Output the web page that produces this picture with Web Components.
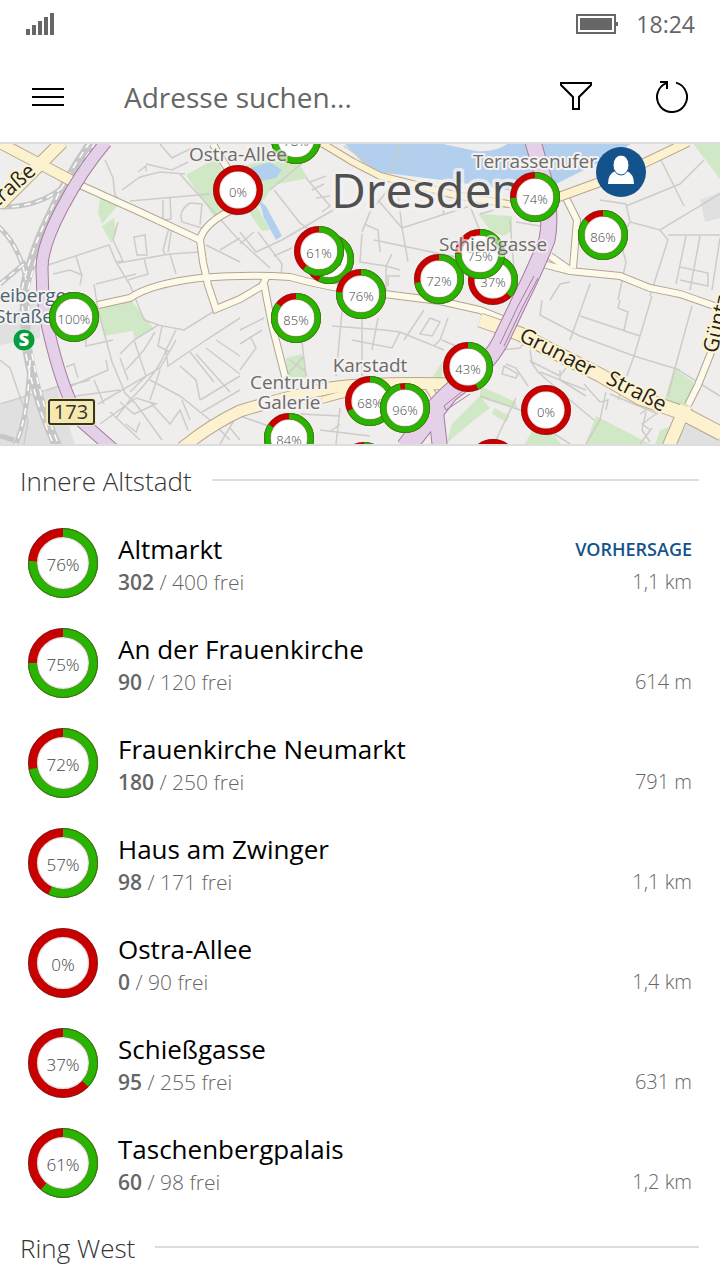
<!DOCTYPE html>
<html lang="de">
<head>
<meta charset="utf-8">
<meta name="viewport" content="width=device-width, initial-scale=1">
<title>Parken Dresden</title>
<style>
  body { margin: 0; background: #fff; color: #000; font-family: "Open Sans", "Noto Sans", sans-serif; }
</style>
</head>
<body>
<parking-app></parking-app>

<script>
class BaseElement extends HTMLElement {
  connectedCallback() {
    if (this.shadowRoot) return;
    this.attachShadow({ mode: "open" }).innerHTML = this.render();
  }
  attr(name, fallback = "") { return this.getAttribute(name) ?? fallback; }
}

/* Phone status bar: signal, battery, clock */
customElements.define("status-bar", class extends BaseElement {
  render() {
    return `
    <style>
      :host { display: flex; align-items: center; gap: 18px; height: 48px; padding: 0 25px 0 26px; color: #666; font-size: 23px; }
      svg { display: block; fill: currentColor; }
      .signal { margin-right: auto; }
    </style>
    <svg class="signal" width="28" height="22" viewBox="0 0 28 22" role="img" aria-label="Signal">
      <path d="M0 16h4v6H0zM6 12h4v10H6zM12 8h4v14h-4zM18 4h4v18h-4zM24 0h4v22h-4z"/>
    </svg>
    <svg width="42" height="20" viewBox="0 0 42 20" role="img" aria-label="Akku">
      <path fill-rule="evenodd" d="M0 0h40v20H0zM2 2v16h36V2z"/><path d="M4 4h32v12H4zM40 8h2v4h-2z"/>
    </svg>
    <time><slot></slot></time>`;
  }
});

/* Menu, address search, filter and refresh */
customElements.define("search-bar", class extends BaseElement {
  render() {
    return `
    <style>
      :host { display: flex; align-items: center; height: 90px; padding-top: 4px; border-bottom: 2px solid #ddd; }
      button { flex: none; width: 96px; height: 90px; padding: 0; border: 0; background: none; display: grid; place-items: center; }
      svg { display: block; fill: none; stroke: #000; stroke-width: 2; }
      input { flex: 1; min-width: 0; height: 60px; padding: 0 28px; border: 0; outline: 0; background: none; font: inherit; font-size: 28px; color: #000; }
      input::placeholder { color: #666; opacity: 1; }
    </style>
    <button aria-label="Menü"><svg width="32" height="18" viewBox="0 0 32 18"><path d="M0 1h32M0 9h32M0 17h32"/></svg></button>
    <input type="text" aria-label="Adresse suchen" placeholder="Adresse suchen...">
    <button aria-label="Filter"><svg width="32" height="32" viewBox="0 0 32 32"><path d="M1 2h30v2L19 16v12h-6V16L1 4z"/></svg></button>
    <button aria-label="Aktualisieren"><svg width="32" height="32" viewBox="0 0 32 32"><path d="M20 1.600A15 15 0 1 1 10.500 2.100M4 1h7v7"/></svg></button>`;
  }
});

/* Donut that shows the share of free spaces */
customElements.define("free-ring", class extends BaseElement {
  render() {
    const p = Number(this.attr("value", "0"));
    return `
    <style>
      :host { display: grid; flex: none; width: var(--ring-size, 70px); height: var(--ring-size, 70px); font-size: var(--ring-font, 17px); font-weight: 300; color: #444; line-height: 24px; }
      svg, span { grid-area: 1 / 1; }
      svg { width: 100%; height: 100%; display: block; }
      span { place-self: center; padding-top: var(--ring-drop, 4px); }
    </style>
    <svg viewBox="0 0 70 70" aria-hidden="true">
      <circle cx="35" cy="35" r="34.500" fill="#fff"/>
      <g fill="none" stroke-width="9">
        <circle cx="35" cy="35" r="30.500" stroke="#c80000"/>
        <circle cx="35" cy="35" r="30.500" stroke="#28b400" pathLength="100" stroke-dasharray="${p} 100" transform="rotate(-90 35 35)" ${p ? "" : 'visibility="hidden"'}/>
        <circle cx="35" cy="35" r="34.500" stroke="#333" stroke-opacity=".45" stroke-width="1"/>
        <circle cx="35" cy="35" r="25.500" stroke="#888" stroke-opacity=".25" stroke-width="1.500"/>
      </g>
    </svg>
    <span>${p}%</span>`;
  }
});

/* A car park on the map; x is measured from the middle of the map, y from its top */
customElements.define("map-pin", class extends BaseElement {
  render() {
    const x = this.attr("x"), y = this.attr("y");
    return `
    <style>
      :host { position: absolute; left: calc(50% + ${x}px); top: ${y}px; width: 50px; height: 50px; transform: translate(-50%, -50%); --ring-size: 50px; --ring-font: 13px; --ring-drop: 3px; }
    </style>
    <slot><free-ring value="${this.attr("value")}"></free-ring></slot>`;
  }
});

customElements.define("city-map", class extends BaseElement {
  render() {
    const light = [
      "M80 185L140 212L200 240", "M213 144L222 160L232 175", "M200 240Q204 222 238 207", "M200 240L203 262L208 285L216 309L240 299L262 286L266 278",
      "M98 305L130 298Q150 284 200 278Q250 274 290 277Q330 288 361 291L400 296L440 301L480 310L510 322",
      "M264 284L272 325L286 380", "M535 262L570 271L620 276L650 288L680 294L720 308", "M566 198L577 220L573 268", "M550 256L570 270", "M716 340L698 385L688 405"
    ].map(d => [d, 6]);
    const yellow = [
      ["M0 143L40 164L76 183", 10], ["M62 142L38 166L0 204", 12], ["M320 142L353 162L380 176L420 186L455 195L520 206", 6],
      ["M556 198L600 182L640 165L688 142", 8], ["M480 320L520 334L560 355L600 375L640 398L680 412L722 434", 13],
      ["M182 448Q212 424 240 411Q290 396 330 388Q370 382 460 384", 11], ["M322 400Q370 386 400 388", 6], ["M686 406L668 448", 12], ["M428 386L442 410", 6]
    ];
    const purple = [
      ["M106 142Q82 170 62 208Q42 246 42 268Q42 310 52 345Q66 400 82 422L114 450", 11],
      ["M533 142L544 180Q552 215 547 240Q536 268 520 300L500 342Q486 368 450 394L408 448", 15],
      ["M484 368Q446 388 436 412L440 448", 14], ["M486 364Q450 386 428 414L404 446", 14]
    ];
    const draw = (list, edge, fill) =>
      list.map(([d, w]) => `<path d="${d}" stroke="${edge}" stroke-width="${w + 2}"/>`).join("") +
      list.map(([d, w]) => `<path d="${d}" stroke="${fill}" stroke-width="${w}"/>`).join("");
    return `
    <style>
      :host { display: block; position: relative; height: 300px; overflow: hidden; background: #f0eeed; border-bottom: 2px solid #ddd; }
      svg { display: block; width: 100%; height: 300px; overflow: visible; }
      .over { position: absolute; inset: 0; pointer-events: none; }
      text { font-size: 19px; fill: #6e6a6a; stroke: #f4f2f1; stroke-width: 4px; stroke-linejoin: round; paint-order: stroke; }
      .over text { stroke-opacity: .7; }
      .mid { text-anchor: middle; }
      .city { font-size: 48px; fill: #505050; stroke-width: 7px; stroke-opacity: .8; }
      .street { font-size: 21px; fill: #222; stroke: #fdf3cf; }
      .station { fill: #4a6472; }
      .sign { font-size: 20px; fill: #333; stroke: none; }
      .s { font-size: 18px; font-weight: 800; fill: #fff; stroke: none; }
    </style>
    <svg viewBox="0 144 720 300" aria-hidden="true">
      <g fill="#e0e0e0">
        <path d="M0 405L57 387L76 448L0 448zM0 318L40 300V338L0 345zM700 200L720 192V218L705 222z"/>
        <path d="M672 448L690 420L722 440V448z"/>
      </g>
      <path fill="#b2cfee" d="M343 142L362 162L378 172L410 176L450 181L520 192L556 184L600 162L634 142H510Q496 153 476 151L434 142z"/>
      <g fill="#d0e8c6">
        <path d="M186 175L216 158L228 180L236 205L214 217zM100 198L118 205L102 224L98 212zM102 226L114 218L116 232L111 243zM97 306L131 300L154 329L135 340L133 331L104 336z"/>
        <path d="M244 166L262 160L298 162L308 178L274 185L258 208L270 230L262 231L244 205zM692 142H722V182zM286 358L302 354L308 378L288 378zM478 214L512 216L512 230L504 236L492 232zM674 368L696 384L686 410L664 402z"/>
        <path d="M596 416L650 444V448H584zM480 386L516 402L518 410L480 398zM494 408L510 416L506 422L492 414zM534 428L550 430L564 448H522zM654 448L660 430L672 426L668 448zM442 362V380L432 378zM452 424L480 396L490 408L474 420L446 444z"/>
      </g>
      <path fill="#b2cfee" d="M250 168L270 162L282 170L276 178L256 182zM259 200L266 206L282 236L276 240L264 218z"/>
      <g fill="none" stroke="#cdccc8" stroke-width="1.500">
        <path d="M105 160L113 178L115 195L122 203M122 190L140 177L160 172L185 174M138 172L146 166V171M146 164L172 170L188 162M160 144L172 158L192 148M130 201L210 194M163 200V220L171 219L170 198M190 203Q178 210 182 222L202 228M190 203L202 204L200 225M170 224L163 250L165 254M172 226L168 252M134 237L145 235L147 255H137zM118 222L113 240L123 261L116 262M48 265L109 245L116 262L130 285L144 320M76 256L82 276M53 274L70 270L82 275L80 285M96 284L120 278L136 274M144 258L148 274L128 280M118 263L170 254L200 252M170 254L176 274M206 245L240 262M240 238L220 250M94 284L98 310L112 362L125 393L136 404"/>
        <path d="M180 174L236 237L270 268M306 160L270 190M274 190L300 223L325 240M240 232L256 252L282 240M306 178L330 206L322 212M310 182L326 176M312 190L324 184M316 198L330 196M258 190L236 216M258 232L282 264L281 276M282 240L340 206M274 256L292 248M240 244L254 232M362 232L370 212L388 190M364 224L378 230L380 252M362 234L360 262L386 266L392 254M386 266V290M374 240L480 262M378 200L402 228L408 262M402 228L470 206M398 194L402 228M440 194L444 214M386 266L400 270M400 276H388V286"/>
        <path d="M344 146L370 164M470 206L482 236M400 144L390 174M480 214L560 192M510 220L514 270M540 226L516 222M600 200L626 204L630 222L620 240L626 262L618 300M626 206L680 184L704 160M660 158L684 206M630 222L660 230L720 194M660 230L668 240L650 296M668 235H720M686 236L676 284M700 236L690 290M720 238L712 290M680 267L708 273V286L680 280M550 300L560 284L570 282M590 284L570 340M620 300L618 308L628 312L624 330M580 316L640 336M652 296L634 356L618 400M542 300L540 315L580 336L634 356L680 370M692 306L675 368L720 396M675 368L668 396"/>
        <path d="M86 330V346L113 340M66 367L74 364L78 378M62 390L108 370L106 360M66 386L90 380M94 380L104 404M76 396L120 390M98 404L160 368L176 340M120 354L134 340L158 325L184 330L216 310M126 370L144 350L155 332M134 340L146 376L130 392M120 358L128 380M176 330L166 350L168 366L206 340L240 318M166 350Q160 370 130 400L116 418M144 320L162 326L158 346L170 352M190 352L214 382M180 366L196 380L200 400M150 380L180 396L210 420L230 440M100 424L136 398L156 404L134 414L120 402M136 404L162 440M110 412L140 440M150 402L170 424L180 410L188 430M160 370L150 400M196 354L230 392M206 348L240 374M216 340L240 356M200 400L240 376M202 412L240 390M140 422L136 432L126 424M182 400L190 420M240 410L220 444M230 428L240 440"/>
        <path d="M0 360L10 368L28 420L24 444M0 404L60 386M240 330L264 318M240 344L262 330M240 370L256 348L250 336M344 290L336 376M362 318V376M378 318L372 350M332 326L384 330L400 332L392 348L352 340M400 332L444 350M424 310L404 340M430 318L440 322L432 336L420 334zM448 318L440 340L434 346M442 340L456 346M302 342L306 376M290 360L306 372M304 356L288 374M340 408L336 444M300 414L340 416M240 416L280 430M320 430L370 436M330 432L340 424"/>
        <path d="M500 350L520 348L530 336M506 364L516 368L528 386M530 350L532 362L560 376L566 368M504 366L518 374L516 378L502 374zM540 372L586 390M530 360L538 372L570 400L594 420M560 370V380L586 396M480 396L520 410L546 430M516 398L496 440M606 392L600 420L586 444M610 394L658 414M600 402L608 400L606 410M646 412L642 430L650 442M656 414L642 424L650 430M660 400L640 414M652 428L640 444M548 430L570 444M584 384L600 402"/>
      </g>
      <g fill="none">
        <g stroke="#c6c6c6">
          <path stroke-width="10" d="M92 142Q66 180 52 212Q32 252 24 290L26 340Q32 390 58 448"/>
          <path stroke-width="5" d="M0 207Q36 208 62 188M-2 226Q20 246 26 280M0 284L26 262M30 360Q28 420 14 448M0 436L14 440"/>
        </g>
        <g stroke="#fff" stroke-width="1.500" stroke-dasharray="7 5">
          <path d="M90 142Q64 180 50 212Q30 252 22 290L24 340Q30 390 55 448M96 142Q70 180 55 212Q36 252 28 290L30 340Q36 390 60 448M0 207Q36 208 62 188M-2 226Q20 246 26 280M0 284L26 262M30 360Q28 420 14 448"/>
        </g>
        ${draw(light, "#b0a594", "#fefaea")}
        ${draw(yellow, "#b8a68c", "#fdf2cf")}
        ${draw(purple, "#a57c9c", "#e5d0ea")}
        <path stroke="#a57c9c" d="M534 276L518 306L500 344M538 278L522 308L504 346M474 382L444 406L446 410L470 394"/>
      </g>
      <text class="city" x="331" y="208">Dresden</text>
      <text class="mid" x="535" y="168">Terrassenufer</text>
      <text class="mid" x="370" y="372">Karstadt</text>
      <text class="mid" x="289" y="389">Centrum</text>
      <text class="mid" x="289" y="409">Galerie</text>
      <text class="station mid" x="28" y="302">Freiberger</text>
      <text class="station mid" x="24" y="323">Straße</text>
      <text class="street" text-anchor="end" transform="translate(37 173) rotate(-41)">Straße</text>
      <text class="street" transform="translate(518 340) rotate(27)">Grunaer</text>
      <text class="street" transform="translate(605 383) rotate(27)">Straße</text>
      <text class="street" transform="translate(717 354) rotate(-77)">Güntz</text>
      <circle cx="24" cy="340" r="11" fill="#0a9c3c" stroke="#fff" stroke-opacity=".7"/>
      <text class="s mid" x="24" y="346">S</text>
      <rect x="46" y="398" width="50" height="28" rx="3" fill="#f6e9ae"/>
      <rect x="49" y="400" width="45" height="24" rx="2" fill="#f6e9ae" stroke="#333" stroke-width="2"/>
      <text class="sign mid" x="71" y="419">173</text>
    </svg>
    <slot></slot>
    <svg class="over" viewBox="0 144 720 300" aria-hidden="true">
      <text class="mid" x="238" y="161">Ostra-Allee</text>
      <text class="mid" x="493" y="251">Schießgasse</text>
    </svg>`;
  }
});

/* District heading followed by a rule */
customElements.define("section-title", class extends BaseElement {
  render() {
    return `
    <style>
      :host { display: flex; align-items: center; gap: 20px; height: 67px; padding: 0 21px 0 20px; }
      h2 { margin: 0; padding-top: 2px; font-size: 26px; line-height: 36px; font-weight: 300; color: #333; }
      i { flex: 1; height: 2px; background: #ddd; }
    </style>
    <h2><slot></slot></h2><i></i>`;
  }
});

customElements.define("parking-row", class extends BaseElement {
  render() {
    return `
    <style>
      :host { display: flex; align-items: center; gap: 20px; height: 100px; padding: 0 28px; }
      .text { flex: 1; min-width: 0; padding-top: 2px; }
      .line { display: flex; align-items: center; justify-content: space-between; color: #666; }
      h3 { margin: 0; font-size: 26px; line-height: 36px; font-weight: 400; color: #000; }
      p { margin: 0; font-size: 21px; line-height: 30px; font-weight: 300; }
      b { font-weight: 600; }
      .far { font-size: 20px; }
      ::slotted(button) { border: 0; padding: 0; background: none; color: #14528c; font: inherit; font-size: 18px; font-weight: 600; line-height: 24px; text-transform: uppercase; }
    </style>
    <free-ring value="${this.attr("value")}"></free-ring>
    <div class="text">
      <div class="line"><h3>${this.attr("name")}</h3><slot></slot></div>
      <div class="line"><p><b>${this.attr("free")}</b> / ${this.attr("total")} frei</p><p class="far">${this.attr("distance")}</p></div>
    </div>`;
  }
});

customElements.define("parking-app", class extends BaseElement {
  render() {
    const pins = [
      [-64, -5, 78], [-122, 46, 0], [-31, 115, 57], [-41, 107, 61], [1, 150, 76], [133, 136, 37], [79, 135, 72], [120, 110, 75],
      [175, 53, 74], [243, 91, 86], [-64, 174, 85], [-286, 173, 100], [108, 223, 43], [10, 257, 68], [45, 264, 96], [-71, 294, 84],
      [4, 323, 70], [186, 266, 0], [133, 320, 0]
    ];
    const rows = [
      ["Altmarkt", 302, 400, 76, "1,1 km"], ["An der Frauenkirche", 90, 120, 75, "614 m"], ["Frauenkirche Neumarkt", 180, 250, 72, "791 m"],
      ["Haus am Zwinger", 98, 171, 57, "1,1 km"], ["Ostra-Allee", 0, 90, 0, "1,4 km"], ["Schießgasse", 95, 255, 37, "631 m"], ["Taschenbergpalais", 60, 98, 61, "1,2 km"]
    ];
    return `
    <style>:host { display: block; } .me { display: block; }</style>
    <status-bar>18:24</status-bar>
    <search-bar></search-bar>
    <city-map>
      ${pins.map(([x, y, v]) => `<map-pin x="${x}" y="${y}" value="${v}"></map-pin>`).join("")}
      <map-pin x="261" y="28"><svg class="me" width="50" height="50" viewBox="0 0 50 50" role="img" aria-label="Mein Standort">
        <circle cx="25" cy="25" r="25" fill="#14528c"/>
        <path fill="#fff" d="M12 37Q12 27 19 24Q25 30 31 24Q38 27 38 37z"/>
        <ellipse cx="25" cy="18" rx="8" ry="10" fill="#fff" stroke="#14528c"/>
      </svg></map-pin>
    </city-map>
    <main>
      <section-title>Innere Altstadt</section-title>
      ${rows.map(([n, f, t, v, d], i) => `<parking-row name="${n}" free="${f}" total="${t}" value="${v}" distance="${d}">${i ? "" : "<button>Vorhersage</button>"}</parking-row>`).join("")}
      <section-title>Ring West</section-title>
    </main>`;
  }
});
</script>
</body>
</html>
